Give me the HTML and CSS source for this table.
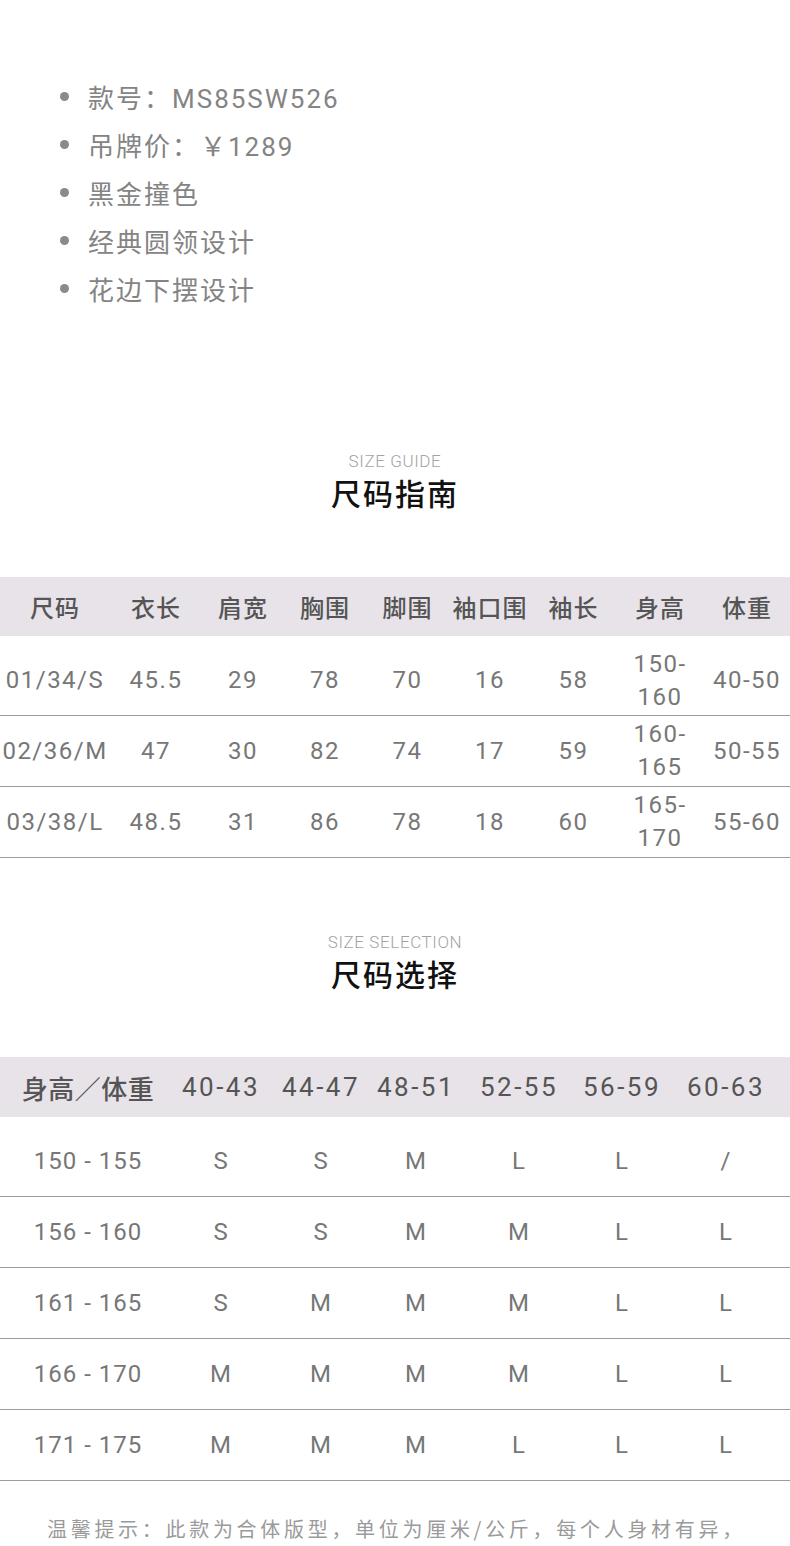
FILE: index.html
```html
<!DOCTYPE html>
<html lang="zh-CN">
<head>
<meta charset="utf-8">
<title>尺码指南</title>
<link rel="stylesheet" href="styles.css">
</head>
<body>
<ul class="features">
  <li>款号：MS85SW526</li>
  <li>吊牌价：￥1289</li>
  <li>黑金撞色</li>
  <li>经典圆领设计</li>
  <li>花边下摆设计</li>
</ul>

<div class="heading heading-guide">
  <div class="heading-en">SIZE GUIDE</div>
  <div class="heading-zh">尺码指南</div>
</div>

<div class="table guide">
  <div class="row head">
    <div class="cell">尺码</div><div class="cell">衣长</div><div class="cell">肩宽</div><div class="cell">胸围</div><div class="cell">脚围</div><div class="cell">袖口围</div><div class="cell">袖长</div><div class="cell">身高</div><div class="cell">体重</div>
  </div>
  <div class="row body first">
    <div class="cell">01/34/S</div><div class="cell">45.5</div><div class="cell">29</div><div class="cell">78</div><div class="cell">70</div><div class="cell">16</div><div class="cell">58</div><div class="cell">150-160</div><div class="cell">40-50</div>
  </div>
  <div class="row body">
    <div class="cell">02/36/M</div><div class="cell">47</div><div class="cell">30</div><div class="cell">82</div><div class="cell">74</div><div class="cell">17</div><div class="cell">59</div><div class="cell">160-165</div><div class="cell">50-55</div>
  </div>
  <div class="row body">
    <div class="cell">03/38/L</div><div class="cell">48.5</div><div class="cell">31</div><div class="cell">86</div><div class="cell">78</div><div class="cell">18</div><div class="cell">60</div><div class="cell">165-170</div><div class="cell">55-60</div>
  </div>
</div>

<div class="heading heading-select">
  <div class="heading-en">SIZE SELECTION</div>
  <div class="heading-zh">尺码选择</div>
</div>

<div class="table select">
  <div class="row head">
    <div class="cell label">身高／体重</div><div class="cell">40-43</div><div class="cell">44-47</div><div class="cell">48-51</div><div class="cell">52-55</div><div class="cell">56-59</div><div class="cell">60-63</div>
  </div>
  <div class="row body first">
    <div class="cell">150 - 155</div><div class="cell">S</div><div class="cell">S</div><div class="cell">M</div><div class="cell">L</div><div class="cell">L</div><div class="cell">/</div>
  </div>
  <div class="row body">
    <div class="cell">156 - 160</div><div class="cell">S</div><div class="cell">S</div><div class="cell">M</div><div class="cell">M</div><div class="cell">L</div><div class="cell">L</div>
  </div>
  <div class="row body">
    <div class="cell">161 - 165</div><div class="cell">S</div><div class="cell">M</div><div class="cell">M</div><div class="cell">M</div><div class="cell">L</div><div class="cell">L</div>
  </div>
  <div class="row body">
    <div class="cell">166 - 170</div><div class="cell">M</div><div class="cell">M</div><div class="cell">M</div><div class="cell">M</div><div class="cell">L</div><div class="cell">L</div>
  </div>
  <div class="row body">
    <div class="cell">171 - 175</div><div class="cell">M</div><div class="cell">M</div><div class="cell">M</div><div class="cell">L</div><div class="cell">L</div><div class="cell">L</div>
  </div>
</div>

<p class="note">温馨提示：此款为合体版型，单位为厘米/公斤，每个人身材有异，</p>
</body>
</html>
```

FILE: styles.css
```css
* {
  box-sizing: border-box;
}

body {
  margin: 0;
  width: 790px;
  background: #ffffff;
  font-family: Roboto, "Noto Sans CJK SC", sans-serif;
  color: #7a7a7a;
}

.features {
  list-style: none;
  margin: 0;
  padding: 72px 0 0 0;
}

.features li {
  display: flex;
  align-items: center;
  height: 48px;
  padding-left: 60px;
  font-size: 26px;
  color: #848484;
  letter-spacing: 2px;
}

.features li::before {
  content: "";
  flex: none;
  width: 9px;
  height: 9px;
  border-radius: 50%;
  background: #8a8a8a;
  margin-right: 19px;
}

.heading {
  text-align: center;
}

.heading-guide {
  margin-top: 139px;
}

.heading-select {
  margin-top: 74px;
}

.heading-en {
  font-size: 17px;
  line-height: 20px;
  font-weight: 300;
  color: #a3a3a3;
  letter-spacing: 0.6px;
}

.heading-zh {
  margin-top: 4px;
  font-size: 30px;
  line-height: 40px;
  font-weight: 500;
  color: #111111;
  letter-spacing: 2px;
}

.table {
  width: 790px;
}

.guide {
  margin-top: 62px;
}

.select {
  margin-top: 61px;
}

.row {
  display: grid;
}

.guide .row {
  grid-template-columns: 110px 92px 82px 82px 83px 82px 85px 88px 86px;
}

.select .row {
  grid-template-columns: 176px 90px 110px 80px 126px 80px 1fr;
}

.cell {
  display: flex;
  align-items: center;
  justify-content: center;
  text-align: center;
  white-space: normal;
}

.head {
  background: #e8e3e9;
  color: #555555;
}

.head .cell {
  white-space: nowrap;
}

.guide .head {
  height: 59px;
  font-size: 24px;
  font-weight: 500;
  letter-spacing: 1px;
}

.select .head {
  height: 60px;
  font-size: 26px;
  letter-spacing: 2.5px;
}

.select .head .label {
  font-weight: 500;
  letter-spacing: 0.5px;
}

.body {
  border-bottom: 1px solid #9c9c9c;
  color: #777777;
  font-size: 24px;
  line-height: 33px;
}

.guide .body {
  height: 71px;
  letter-spacing: 1.5px;
}

.guide .body .cell {
  padding: 0 6px;
}

.select .body {
  height: 71px;
  letter-spacing: 1px;
}

.body.first {
  height: 80px;
  padding-top: 10px;
}

.note {
  margin: 33px 0 0 0;
  padding-left: 47px;
  font-family: "Noto Sans CJK SC", sans-serif;
  font-size: 20px;
  line-height: 30px;
  letter-spacing: 3.7px;
  color: #9a9a9a;
  white-space: nowrap;
}
```
